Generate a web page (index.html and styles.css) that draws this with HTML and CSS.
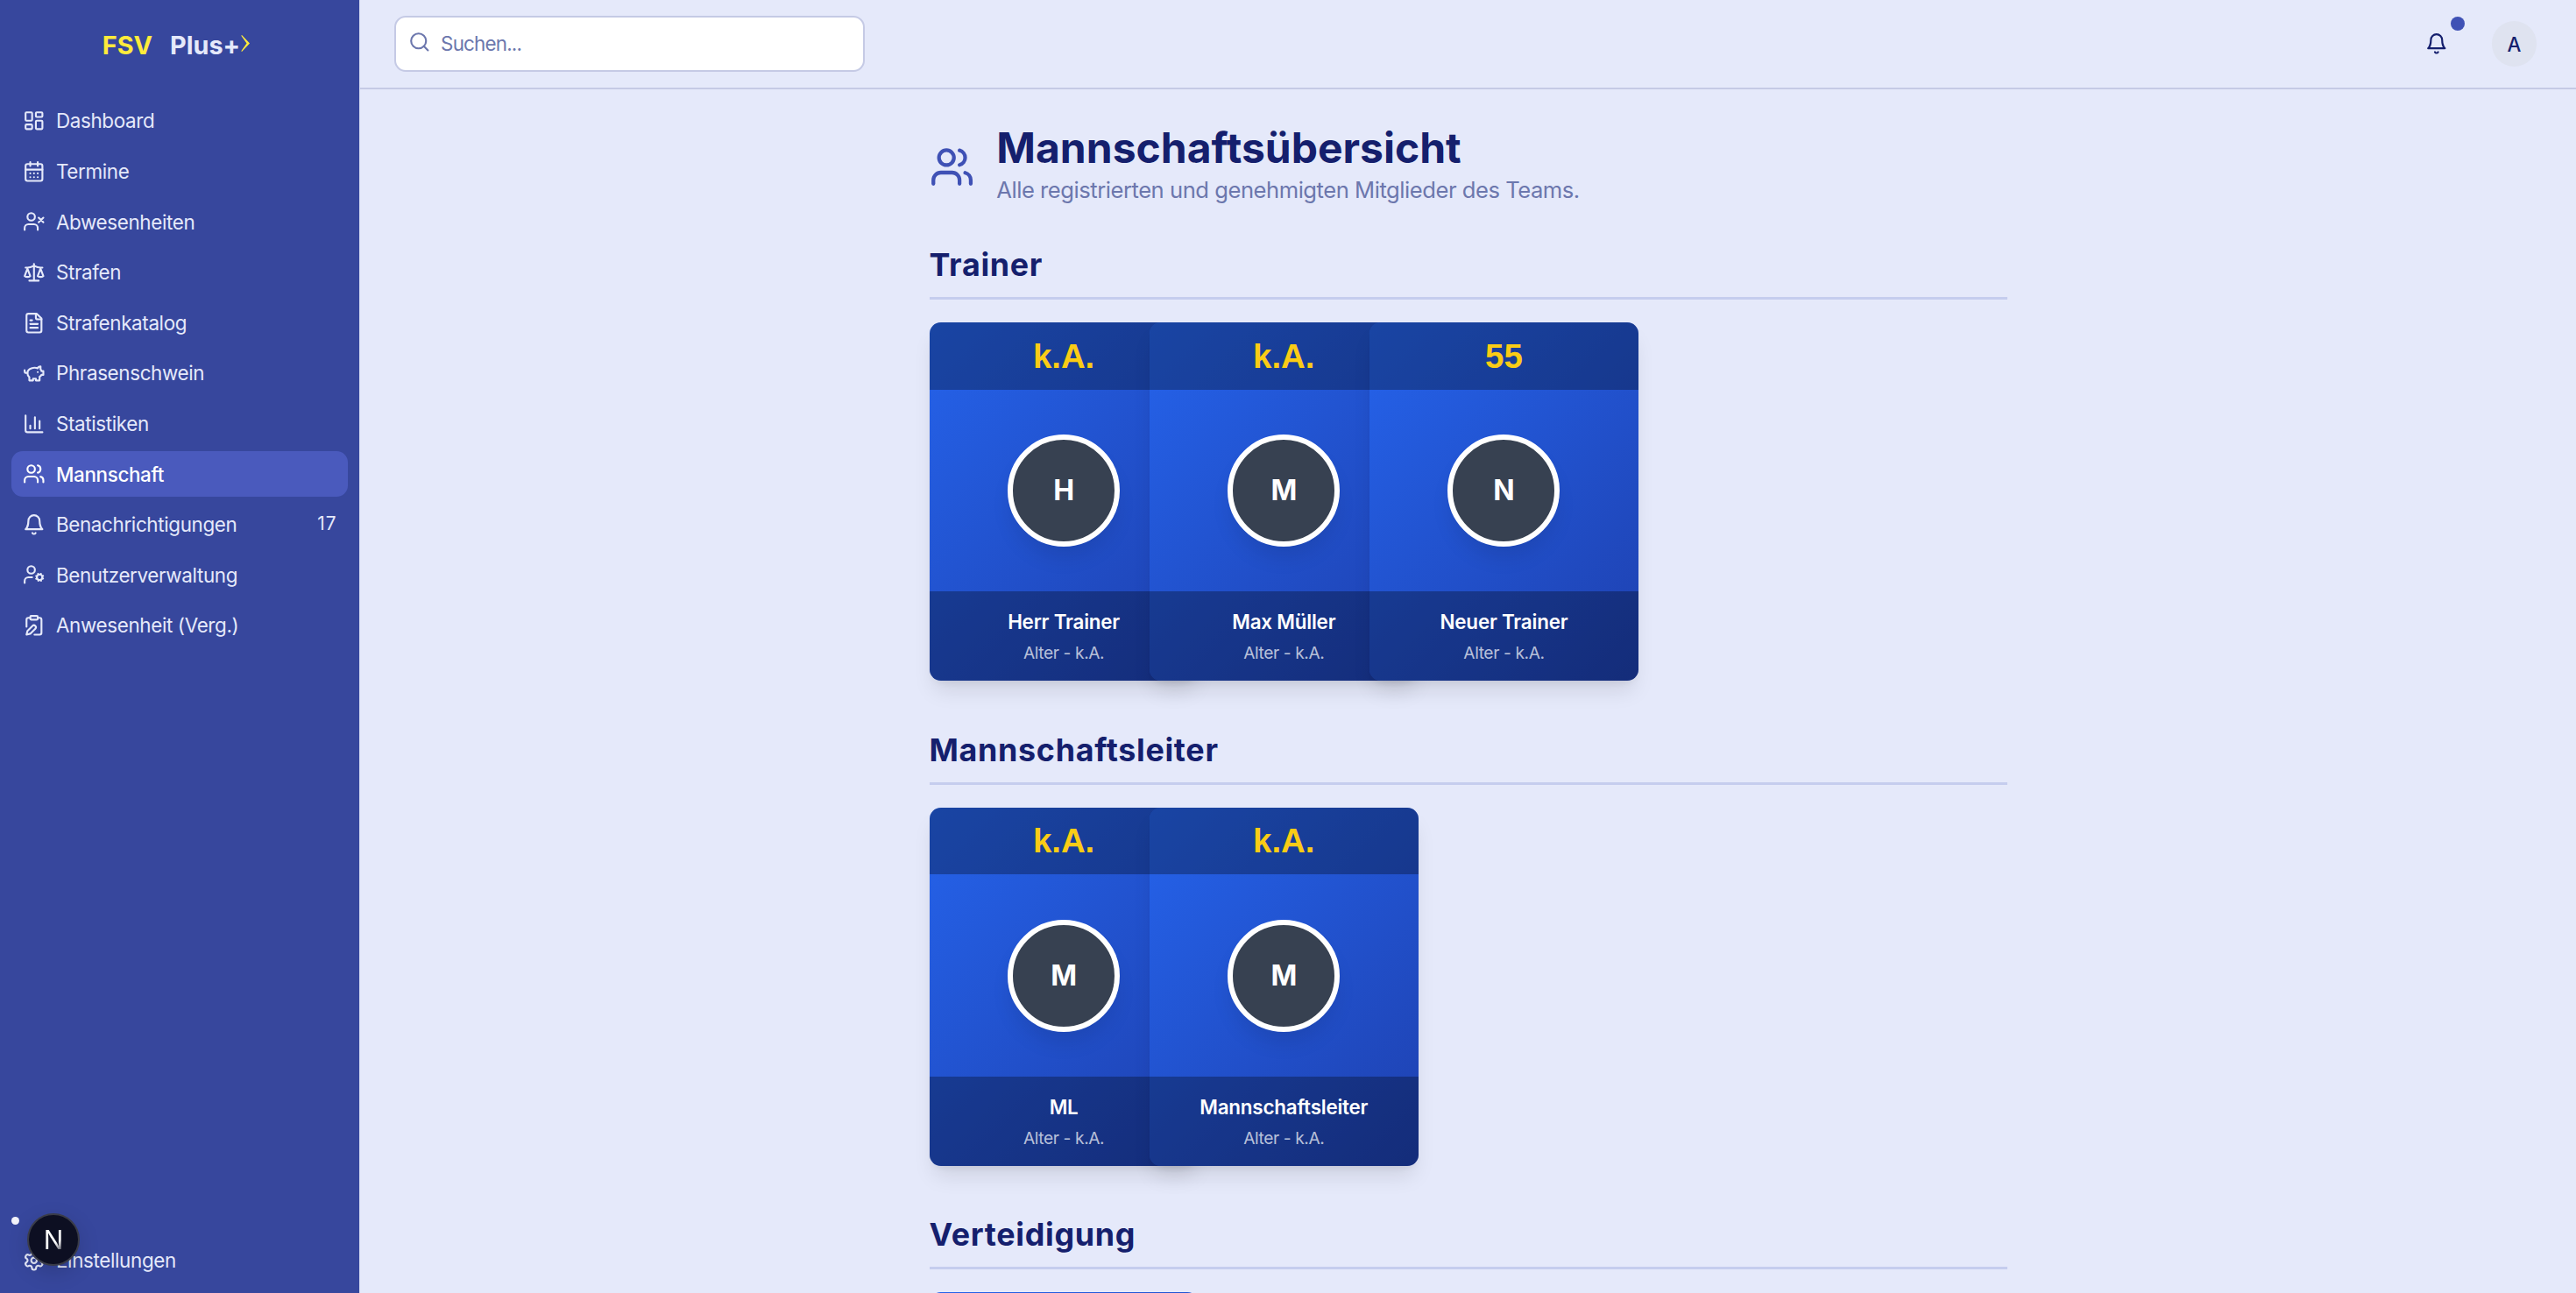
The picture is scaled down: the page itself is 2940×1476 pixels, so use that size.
FILE: index.html
```html
<!DOCTYPE html>
<html lang="de">
<head>
    <meta charset="UTF-8">
    <meta name="viewport" content="width=device-width, initial-scale=1.0">
    <title>Mannschaftsübersicht</title>
    <link rel="stylesheet" href="styles.css">
</head>
<body>

    <!-- icon sprite -->
    <svg class="sprite" xmlns="http://www.w3.org/2000/svg">
        <symbol id="i-dashboard" viewBox="0 0 24 24"><rect x="3" y="3" width="7" height="9" rx="1"/><rect x="14" y="3" width="7" height="5" rx="1"/><rect x="14" y="12" width="7" height="9" rx="1"/><rect x="3" y="16" width="7" height="5" rx="1"/></symbol>
        <symbol id="i-calendar" viewBox="0 0 24 24"><path d="M8 2v4M16 2v4"/><rect x="3" y="4" width="18" height="18" rx="2"/><path d="M3 10h18M8 14h.01M12 14h.01M16 14h.01M8 18h.01M12 18h.01M16 18h.01"/></symbol>
        <symbol id="i-user-x" viewBox="0 0 24 24"><path d="M16 21v-2a4 4 0 0 0-4-4H6a4 4 0 0 0-4 4v2"/><circle cx="9" cy="7" r="4"/><path d="m17 8 5 5M22 8l-5 5"/></symbol>
        <symbol id="i-scale" viewBox="0 0 24 24"><path d="m16 16 3-8 3 8c-.87.65-1.92 1-3 1s-2.13-.35-3-1Z"/><path d="m2 16 3-8 3 8c-.87.65-1.92 1-3 1s-2.13-.35-3-1Z"/><path d="M7 21h10M12 3v18M3 7h2c2 0 5-1 7-2 2 1 5 2 7 2h2"/></symbol>
        <symbol id="i-file" viewBox="0 0 24 24"><path d="M15 2H6a2 2 0 0 0-2 2v16a2 2 0 0 0 2 2h12a2 2 0 0 0 2-2V7Z"/><path d="M14 2v4a2 2 0 0 0 2 2h4M10 9H8M16 13H8M16 17H8"/></symbol>
        <symbol id="i-piggy" viewBox="0 0 24 24"><path d="M19 5c-1.500 0-2.800 1.400-3 2-3.500-1.500-11-.3-11 5 0 1.800 0 3 2 4.500V20h4v-2h3v2h4v-4c1-.5 1.700-1 2-2h2v-4h-2c0-1-.5-1.500-1-2V5z"/><path d="M2 9v1c0 1.100.9 2 2 2h1M16 11h.01"/></symbol>
        <symbol id="i-chart" viewBox="0 0 24 24"><path d="M3 3v16a2 2 0 0 0 2 2h16M18 17V9M13 17V5M8 17v-3"/></symbol>
        <symbol id="i-users" viewBox="0 0 24 24"><path d="M16 21v-2a4 4 0 0 0-4-4H6a4 4 0 0 0-4 4v2"/><circle cx="9" cy="7" r="4"/><path d="M22 21v-2a4 4 0 0 0-3-3.870M16 3.130a4 4 0 0 1 0 7.750"/></symbol>
        <symbol id="i-bell" viewBox="0 0 24 24"><path d="M6 8a6 6 0 0 1 12 0c0 7 3 9 3 9H3s3-2 3-9"/><path d="M10.300 21a1.940 1.940 0 0 0 3.400 0"/></symbol>
        <symbol id="i-user-cog" viewBox="0 0 24 24"><circle cx="18" cy="15" r="3"/><circle cx="9" cy="7" r="4"/><path d="M10 15H6a4 4 0 0 0-4 4v2M21.700 16.400l-.9-.3M15.200 13.900l-.9-.3M16.600 18.700l.3-.9M19.100 12.200l.3-.9M19.600 18.700l-.4-1M16.800 12.300l-.4-1M14.300 16.600l1-.4M20.700 13.800l1-.4"/></symbol>
        <symbol id="i-clipboard" viewBox="0 0 24 24"><rect x="8" y="2" width="8" height="4" rx="1"/><path d="M10.400 12.600a2 2 0 0 1 3 3L8 21l-4 1 1-4Z"/><path d="M16 4h2a2 2 0 0 1 2 2v14a2 2 0 0 1-2 2h-5.500M4 13.500V6a2 2 0 0 1 2-2h2"/></symbol>
        <symbol id="i-settings" viewBox="0 0 24 24"><path d="M12.220 2h-.44a2 2 0 0 0-2 2v.18a2 2 0 0 1-1 1.730l-.43.25a2 2 0 0 1-2 0l-.15-.08a2 2 0 0 0-2.730.73l-.22.38a2 2 0 0 0 .73 2.730l.15.1a2 2 0 0 1 1 1.720v.51a2 2 0 0 1-1 1.740l-.15.09a2 2 0 0 0-.73 2.730l.22.38a2 2 0 0 0 2.730.73l.15-.08a2 2 0 0 1 2 0l.43.25a2 2 0 0 1 1 1.730V20a2 2 0 0 0 2 2h.44a2 2 0 0 0 2-2v-.18a2 2 0 0 1 1-1.730l.43-.25a2 2 0 0 1 2 0l.15.08a2 2 0 0 0 2.730-.73l.22-.39a2 2 0 0 0-.73-2.730l-.15-.08a2 2 0 0 1-1-1.740v-.5a2 2 0 0 1 1-1.740l.15-.09a2 2 0 0 0 .73-2.730l-.22-.38a2 2 0 0 0-2.730-.73l-.15.08a2 2 0 0 1-2 0l-.43-.25a2 2 0 0 1-1-1.730V4a2 2 0 0 0-2-2z"/><circle cx="12" cy="12" r="3"/></symbol>
        <symbol id="i-search" viewBox="0 0 24 24"><circle cx="11" cy="11" r="8"/><path d="m21 21-4.300-4.300"/></symbol>
    </svg>

    <aside class="sidebar">
        <div class="logo">
            <span class="logo-fsv">FSV</span>
            <span class="logo-plus">Plus+</span>
            <svg class="logo-arrow" viewBox="0 0 10 19"><path d="M1 0 L10 9.500 L1 19 L0.300 18.300 L6.500 9.500 L0.300 0.700 Z"/></svg>
        </div>

        <nav class="nav">
            <a class="nav-item"><svg class="icon"><use href="#i-dashboard"/></svg>Dashboard</a>
            <a class="nav-item"><svg class="icon"><use href="#i-calendar"/></svg>Termine</a>
            <a class="nav-item"><svg class="icon"><use href="#i-user-x"/></svg>Abwesenheiten</a>
            <a class="nav-item"><svg class="icon"><use href="#i-scale"/></svg>Strafen</a>
            <a class="nav-item"><svg class="icon"><use href="#i-file"/></svg>Strafenkatalog</a>
            <a class="nav-item"><svg class="icon"><use href="#i-piggy"/></svg>Phrasenschwein</a>
            <a class="nav-item"><svg class="icon"><use href="#i-chart"/></svg>Statistiken</a>
            <a class="nav-item active"><svg class="icon"><use href="#i-users"/></svg>Mannschaft</a>
            <a class="nav-item"><svg class="icon"><use href="#i-bell"/></svg>Benachrichtigungen<span class="nav-count">17</span></a>
            <a class="nav-item"><svg class="icon"><use href="#i-user-cog"/></svg>Benutzerverwaltung</a>
            <a class="nav-item"><svg class="icon"><use href="#i-clipboard"/></svg>Anwesenheit (Verg.)</a>
        </nav>

        <div class="sidebar-bottom">
            <a class="nav-item"><svg class="icon"><use href="#i-settings"/></svg>Einstellungen</a>
        </div>

        <span class="dev-dot"></span>
        <div class="dev-badge"><span class="dev-letter">N</span></div>
    </aside>

    <div class="main">
        <header class="topbar">
            <div class="search">
                <svg class="icon search-icon"><use href="#i-search"/></svg>
                <span class="search-text">Suchen...</span>
            </div>
            <div class="topbar-right">
                <div class="bell">
                    <svg class="icon"><use href="#i-bell"/></svg>
                    <span class="bell-dot"></span>
                </div>
                <div class="user-avatar">A</div>
            </div>
        </header>

        <main class="content">
            <div class="page-head">
                <svg class="icon page-icon"><use href="#i-users"/></svg>
                <div>
                    <h1>Mannschaftsübersicht</h1>
                    <p>Alle registrierten und genehmigten Mitglieder des Teams.</p>
                </div>
            </div>

            <section class="group">
                <h2>Trainer</h2>
                <div class="cards">
                    <div class="card">
                        <div class="card-top">k.A.</div>
                        <div class="card-body"><div class="avatar">H</div></div>
                        <div class="card-foot"><div class="card-name">Herr Trainer</div><div class="card-age">Alter - k.A.</div></div>
                    </div>
                    <div class="card">
                        <div class="card-top">k.A.</div>
                        <div class="card-body"><div class="avatar">M</div></div>
                        <div class="card-foot"><div class="card-name">Max Müller</div><div class="card-age">Alter - k.A.</div></div>
                    </div>
                    <div class="card">
                        <div class="card-top">55</div>
                        <div class="card-body"><div class="avatar">N</div></div>
                        <div class="card-foot"><div class="card-name">Neuer Trainer</div><div class="card-age">Alter - k.A.</div></div>
                    </div>
                </div>
            </section>

            <section class="group">
                <h2>Mannschaftsleiter</h2>
                <div class="cards">
                    <div class="card">
                        <div class="card-top">k.A.</div>
                        <div class="card-body"><div class="avatar">M</div></div>
                        <div class="card-foot"><div class="card-name">ML</div><div class="card-age">Alter - k.A.</div></div>
                    </div>
                    <div class="card">
                        <div class="card-top">k.A.</div>
                        <div class="card-body"><div class="avatar">M</div></div>
                        <div class="card-foot"><div class="card-name">Mannschaftsleiter</div><div class="card-age">Alter - k.A.</div></div>
                    </div>
                </div>
            </section>

            <section class="group">
                <h2>Verteidigung</h2>
                <div class="cards">
                    <div class="card"></div>
                </div>
            </section>
        </main>
    </div>

</body>
</html>
```

FILE: styles.css
```css
body {
    font-family: 'Inter', sans-serif;
    margin: 0;
    height: 100vh;
    overflow: hidden;
    display: flex;
    background: #e5e9fa;
    color: #151f6d;
}
.sprite {
    display: none;
}
.icon {
    width: 25.6px;
    height: 25.6px;
    flex: none;
    fill: none;
    stroke: currentColor;
    stroke-width: 2;
    stroke-linecap: round;
    stroke-linejoin: round;
}

/* sidebar */
.sidebar {
    position: relative;
    width: 410px;
    flex: none;
    display: flex;
    flex-direction: column;
    background: #37479d;
    border-right: 1.500px solid #d5daf2;
    color: #e5e9fa;
}
.logo {
    height: 102px;
    display: flex;
    align-items: center;
    justify-content: center;
    padding-right: 8px;
    font-size: 28.8px;
    font-weight: 700;
}
.logo-fsv {
    color: #ffeb3b;
    margin-right: 20px;
}
.logo-plus {
    color: #e5e9fa;
}
.logo-arrow {
    width: 10px;
    height: 19px;
    margin: -3px 0 0 1px;
    fill: #ffeb3b;
}
.nav {
    display: flex;
    flex-direction: column;
    gap: 6.400px;
    padding: 10.400px 12.800px 0;
}
.nav-item {
    height: 51.200px;
    box-sizing: border-box;
    display: flex;
    align-items: center;
    gap: 12.800px;
    padding: 0 12.800px;
    border-radius: 12.800px;
    font-size: 22.400px;
    letter-spacing: -0.35px;
}
.nav-item.active {
    background: #4a5abd;
    color: #fff;
    font-weight: 500;
}
.nav-count {
    margin: -2px 0 0 auto;
    font-size: 20.800px;
    letter-spacing: 1px;
}
.sidebar-bottom {
    margin-top: auto;
    padding: 0 12.800px 12px;
}
.dev-dot {
    position: absolute;
    left: 13px;
    top: 1389px;
    width: 9px;
    height: 9px;
    border-radius: 50%;
    background: #f2f3fa;
}
.dev-badge {
    position: absolute;
    left: 31px;
    top: 1385px;
    width: 60px;
    height: 60px;
    box-sizing: border-box;
    border: 2px solid #3a3c48;
    border-radius: 50%;
    background: #0d0f22;
    display: flex;
    align-items: center;
    justify-content: center;
    box-shadow: 0 8px 24px rgba(0, 0, 0, 0.15);
}
.dev-letter {
    font-size: 30px;
    font-weight: 400;
    background: linear-gradient(150deg, #fff 60%, rgba(255, 255, 255, 0.2) 90%);
    -webkit-background-clip: text;
    background-clip: text;
    color: transparent;
}

/* top bar */
.main {
    flex: 1;
    min-width: 0;
    display: flex;
    flex-direction: column;
}
.topbar {
    height: 102px;
    flex: none;
    box-sizing: border-box;
    border-bottom: 2px solid #c5cae5;
    display: flex;
    align-items: center;
    justify-content: space-between;
    padding: 0 45px 0 38.500px;
}
.search {
    width: 537px;
    height: 64px;
    box-sizing: border-box;
    margin-top: -1px;
    background: #fff;
    border: 2px solid #c5cae5;
    border-radius: 13px;
    display: flex;
    align-items: center;
    gap: 12px;
    padding: 0 14px;
    color: #6c77ad;
    font-size: 22.400px;
    letter-spacing: -0.8px;
}
.search-icon {
    margin-top: -4px;
}
.topbar-right {
    display: flex;
    align-items: center;
    gap: 50px;
}
.bell {
    position: relative;
    display: flex;
    color: #151f6d;
}
.bell-dot {
    position: absolute;
    right: -19px;
    top: -18px;
    width: 16px;
    height: 16px;
    border-radius: 50%;
    background: #3f51b5;
}
.user-avatar {
    width: 51.200px;
    height: 51.200px;
    border-radius: 50%;
    background: #dfe3f0;
    display: flex;
    align-items: center;
    justify-content: center;
    font-size: 22.400px;
    font-weight: 500;
}

/* content */
.content {
    flex: 1;
    width: 1230px;
    margin: 0 auto;
    padding-top: 38.400px;
}
.page-head {
    display: flex;
    align-items: center;
    gap: 25.600px;
    margin-bottom: 38.400px;
}
.page-icon {
    width: 51.200px;
    height: 51.200px;
    color: #3f51b5;
    margin-top: 4px;
}
h1 {
    margin: 0;
    font-size: 48px;
    line-height: 57.600px;
    font-weight: 700;
}
.page-head p {
    margin: 0;
    font-size: 25.600px;
    line-height: 38.400px;
    letter-spacing: -0.47px;
    color: #6c77ad;
}
.group {
    margin-bottom: 51.200px;
}
h2 {
    margin: 0 0 26px;
    padding: 2px 0 10.800px;
    border-bottom: 3.200px solid #c5cdee;
    font-size: 35.840px;
    line-height: 51.200px;
    font-weight: 700;
    letter-spacing: 0.7px;
}

/* player cards */
.cards {
    display: flex;
}
.card {
    width: 307.200px;
    height: 409.600px;
    flex: none;
    overflow: hidden;
    display: flex;
    flex-direction: column;
    border-radius: 12.800px;
    background: linear-gradient(135deg, #2563eb, #1e40af);
    box-shadow: 0 16px 24px -5px rgba(0, 0, 0, 0.1), 0 6px 10px -6px rgba(0, 0, 0, 0.1);
    color: #fff;
}
.card + .card {
    margin-left: -56px;
}
.card-top {
    height: 76.800px;
    flex: none;
    box-sizing: border-box;
    padding-top: 1px;
    display: flex;
    align-items: center;
    justify-content: center;
    background: rgba(0, 0, 0, 0.3);
    color: #facc15;
    font-family: 'Liberation Sans', sans-serif;
    font-size: 38.400px;
    font-weight: 700;
}
.card-body {
    height: 230.400px;
    flex: none;
    display: flex;
    align-items: center;
    justify-content: center;
}
.avatar {
    width: 128px;
    height: 128px;
    box-sizing: border-box;
    border: 6.400px solid #fff;
    border-radius: 50%;
    background: #374151;
    display: flex;
    align-items: center;
    justify-content: center;
    font-size: 32px;
    font-weight: 700;
    box-shadow: 0 16px 24px -5px rgba(0, 0, 0, 0.1);
}
.card-foot {
    flex: 1;
    display: flex;
    flex-direction: column;
    align-items: center;
    justify-content: center;
    gap: 5.400px;
    background: rgba(0, 0, 0, 0.3);
}
.card-name {
    margin-top: 1px;
    font-size: 22.400px;
    font-weight: 600;
    line-height: 32px;
    letter-spacing: -0.2px;
}
.card-age {
    font-size: 19.200px;
    line-height: 28px;
    letter-spacing: -0.4px;
    color: rgba(255, 255, 255, 0.7);
}
```
